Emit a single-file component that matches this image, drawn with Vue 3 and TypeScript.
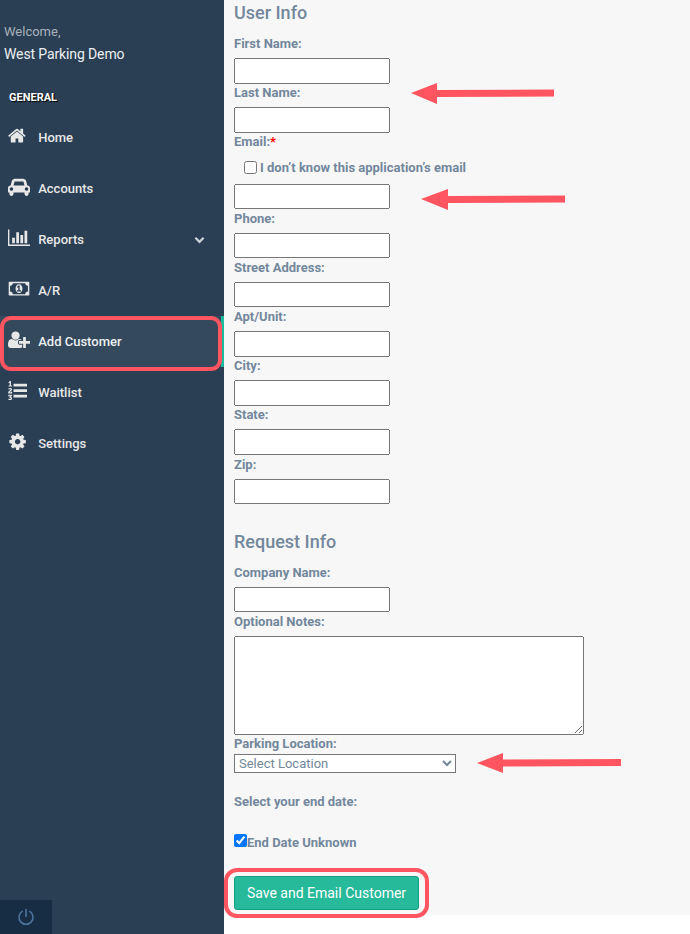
<template>
  <div class="page">
    <aside class="sidebar">
      <div class="profile">
        <span class="welcome">Welcome,</span>
        <span class="user-name">West Parking Demo</span>
      </div>
      <h3 class="nav-title">GENERAL</h3>
      <nav class="nav">
        <a v-for="item in navItems" :key="item.label" class="nav-item" :class="{ active: item.active }">
          <span class="icon-box">
            <svg class="nav-icon" :width="item.width" :viewBox="item.box" fill="currentColor"><path :d="item.path" /></svg>
          </span>
          <span class="nav-label">{{ item.label }}</span>
          <svg v-if="item.chevron" class="chevron" viewBox="0 0 12 8" fill="none" stroke="currentColor" stroke-width="2.4">
            <path d="M1.5 1.5 6 6l4.500-4.500" />
          </svg>
          <span v-if="item.active" class="ring nav-ring"></span>
        </a>
      </nav>
      <div class="sidebar-footer">
        <svg viewBox="0 0 18 18" width="18" height="18" fill="none" stroke="currentColor" stroke-width="1.600" stroke-linecap="round">
          <path d="M5.200 3.400a7 7 0 1 0 7.600 0" />
          <path d="M9 1.500v7" />
        </svg>
      </div>
    </aside>

    <main class="content">
      <h2 class="section-title first">User Info</h2>
      <div v-for="field in userFields" :key="field.label" class="field">
        <label>{{ field.label }}<span v-if="field.required" class="required">*</span></label>
        <div v-if="field.required" class="unknown-email">
          <input type="checkbox" />
          <span>I don’t know this application’s email</span>
        </div>
        <input type="text" class="text-input" />
      </div>

      <h2 class="section-title second">Request Info</h2>
      <div class="field">
        <label>Company Name:</label>
        <input type="text" class="text-input" />
      </div>
      <div class="field">
        <label>Optional Notes:</label>
        <textarea class="notes"></textarea>
      </div>
      <div class="location">
        <label>Parking Location:</label>
        <select class="location-select">
          <option>Select Location</option>
        </select>
      </div>
      <label class="end-date">Select your end date:</label>
      <label class="end-unknown"><input type="checkbox" checked />End Date Unknown</label>
      <div class="save-wrap">
        <button class="save" type="button">Save and Email Customer</button>
        <span class="ring save-ring"></span>
      </div>
    </main>

    <svg class="arrows" width="690" height="934" viewBox="0 0 690 934" fill="#ff5560">
      <path d="M411 93 437 83v7l117-.5v7l-117 .5v7z" />
      <path d="M421 199 448 189v7l117-.5v7l-117 .5v7z" />
      <path d="M477 763 503 753v6.500l118-.5v7l-118 .5v6.500z" />
    </svg>
  </div>
</template>

<script setup lang="ts">
interface NavItem {
  label: string;
  box: string;
  width: number;
  path: string;
  chevron?: boolean;
  active?: boolean;
}

const navItems: NavItem[] = [
  {
    label: 'Home',
    box: '0 0 1792 1792',
    width: 19.25,
    path: 'M1408 992v480q0 26-19 45t-45 19h-384v-384h-256v384h-384q-26 0-45-19t-19-45v-480q0-1 .5-3t.5-3l575-474 575 474q1 2 1 6zm223-69l-62 74q-8 9-21 11h-3q-13 0-21-7l-692-577-692 577q-12 8-24 7-13-2-21-11l-62-74q-8-10-7-23.500t11-21.500l719-599q32-26 76-26t76 26l244 204v-195q0-14 9-23t23-9h192q14 0 23 9t9 23v408l219 182q10 8 11 21.500t-7 23.500z',
  },
  {
    label: 'Accounts',
    box: '0 0 2048 1792',
    width: 22,
    path: 'M480 1120q0-66-47-113t-113-47-113 47-47 113 47 113 113 47 113-47 47-113zm36-320h1016l-89-357q-2-8-14-17.500t-21-9.500h-768q-9 0-21 9.500t-14 17.500zm1372 320q0-66-47-113t-113-47-113 47-47 113 47 113 113 47 113-47 47-113zm160-96v384q0 14-9 23t-23 9h-96v128q0 80-56 136t-136 56-136-56-56-136v-128h-1024v128q0 80-56 136t-136 56-136-56-56-136v-128h-96q-14 0-23-9t-9-23v-384q0-93 65.500-158.500t158.500-65.500h28l105-419q23-94 104-157.500t179-63.500h768q98 0 179 63.500t104 157.500l105 419h28q93 0 158.500 65.500t65.500 158.500z',
  },
  {
    label: 'Reports',
    box: '0 0 2048 1792',
    width: 22,
    path: 'M640 896v512h-256v-512h256zm384-512v1024h-256v-1024h256zm1024 1152v128h-2048v-1536h128v1408h1920zm-640-896v768h-256v-768h256zm384-384v1152h-256v-1152h256z',
    chevron: true,
  },
  {
    label: 'A/R',
    box: '0 0 2048 1792',
    width: 22,
    path: 'M832 1152h384v-96h-128v-448h-114l-148 137 77 80q42-37 55-57h2v288h-128v96zm512-256q0 70-21 142t-59.500 134-101.500 101-138 39-138-39-101.500-101-59.500-134-21-142 21-142 59.500-134 101.500-101 138-39 138 39 101.500 101 59.500 134 21 142zm512 256v-512q-106 0-181-75t-75-181h-1152q0 106-75 181t-181 75v512q106 0 181 75t75 181h1152q0-106 75-181t181-75zm128-832v1152q0 26-19 45t-45 19h-1792q-26 0-45-19t-19-45v-1152q0-26 19-45t45-19h1792q26 0 45 19t19 45z',
  },
  {
    label: 'Add Customer',
    box: '0 0 2048 1792',
    width: 22,
    path: 'M704 896q-159 0-271.500-112.500t-112.500-271.500 112.500-271.500 271.500-112.500 271.500 112.500 112.500 271.500-112.500 271.500-271.500 112.500zm960 128h352q13 0 22.500 9.500t9.500 22.500v192q0 13-9.500 22.500t-22.500 9.500h-352v352q0 13-9.500 22.500t-22.500 9.500h-192q-13 0-22.500-9.500t-9.500-22.500v-352h-352q-13 0-22.500-9.500t-9.500-22.500v-192q0-13 9.500-22.500t22.500-9.500h352v-352q0-13 9.500-22.500t22.500-9.500h192q13 0 22.500 9.500t9.500 22.500v352zm-736 224q0 52 38 90t90 38h256v238q-68 50-171 50h-874q-121 0-194-69t-73-190q0-53 3.500-103.500t14-109 26.500-108.500 43-97.500 62-81 85.500-53.500 111.500-20q19 0 39 17 79 61 154.500 91.500t164.500 30.500 164.500-30.500 154.500-91.500q20-17 39-17 132 0 217 96h-223q-52 0-90 38t-38 90v192z',
    active: true,
  },
  {
    label: 'Waitlist',
    box: '0 0 1792 1792',
    width: 19.25,
    path: 'M381 1620q0 80-54.500 126t-135.500 46q-106 0-172-66l57-88q49 45 106 45 29 0 50.500-14.500t21.500-42.500q0-64-105-56l-26-56q8-10 32.500-43.500t42.500-54 37-38.500v-1q-16 0-48.500 1t-48.500 1v53h-106v-152h333v88l-95 115q51 12 81 49t30 88zm2-627v159h-362q-6-36-6-54 0-51 23.500-93t56.500-68 66-47.500 56.500-43.500 23.500-45q0-25-14.500-38.500t-39.500-13.500q-46 0-81 58l-85-59q24-51 71.500-79.500t105.500-28.500q73 0 123 41.500t50 112.500q0 50-34 91.500t-75 64.500-75.500 50.500-35.500 52.500h127v-60h105zm1409 319v192q0 13-9.500 22.500t-22.500 9.500h-1216q-13 0-22.500-9.500t-9.500-22.500v-192q0-14 9-23t23-9h1216q13 0 22.500 9.500t9.500 22.500zm-1408-899v99h-335v-99h107q0-41 .5-122t.5-121v-12h-2q-8 17-50 54l-71-76 136-127h106v404h108zm1408 387v192q0 13-9.500 22.500t-22.500 9.500h-1216q-13 0-22.500-9.500t-9.500-22.500v-192q0-14 9-23t23-9h1216q13 0 22.500 9.500t9.500 22.500zm0-512v192q0 13-9.500 22.500t-22.500 9.500h-1216q-13 0-22.500-9.500t-9.500-22.500v-192q0-13 9.500-22.500t22.500-9.500h1216q13 0 22.500 9.500t9.500 22.500z',
  },
  {
    label: 'Settings',
    box: '0 0 1792 1792',
    width: 19.25,
    path: 'M1152 896q0-106-75-181t-181-75-181 75-75 181 75 181 181 75 181-75 75-181zm512-109v222q0 12-8 23t-20 13l-185 28q-19 54-39 91 35 50 107 138 10 12 10 25t-9 23q-27 37-99 108t-94 71q-12 0-26-9l-138-108q-44 23-91 38-16 136-29 186-7 28-36 28h-222q-14 0-24.500-8.500t-11.500-21.500l-28-184q-49-16-90-37l-141 107q-10 9-25 9-14 0-25-11-126-114-165-168-7-10-7-23 0-12 8-23 15-21 51-66.500t54-70.500q-27-50-41-99l-183-27q-13-2-21-12.500t-8-23.500v-222q0-12 8-23t19-13l186-28q14-46 39-92-40-57-107-138-10-12-10-24 0-10 9-23 26-36 98.500-107.500t94.500-71.500q13 0 26 10l138 107q44-23 91-38 16-136 29-186 7-28 36-28h222q14 0 24.500 8.500t11.500 21.500l28 184q49 16 90 37l142-107q9-9 24-9 13 0 25 10 129 119 165 170 7 8 7 22 0 12-8 23-15 21-51 66.500t-54 70.500q26 50 41 98l183 28q13 2 21 12.500t8 23.500z',
  },
];

const userFields = [
  { label: 'First Name:' },
  { label: 'Last Name:' },
  { label: 'Email:', required: true },
  { label: 'Phone:' },
  { label: 'Street Address:' },
  { label: 'Apt/Unit:' },
  { label: 'City:' },
  { label: 'State:' },
  { label: 'Zip:' },
];
</script>

<style>
html,
body {
  margin: 0;
  background: #fff;
}
</style>

<style scoped>
.page {
  position: relative;
  display: flex;
  width: 690px;
  height: 934px;
  overflow: hidden;
  font-family: Roboto, "Liberation Sans", sans-serif;
  font-size: 13px;
  color: #73879c;
}

.sidebar {
  position: relative;
  flex: 0 0 224px;
  height: 934px;
  background: #2a3f54;
  box-sizing: border-box;
  padding-top: 22px;
}

.profile {
  display: flex;
  flex-direction: column;
  padding-left: 4px;
}

.welcome {
  height: 20px;
  line-height: 20px;
  font-size: 13px;
  color: #a9b2bb;
}

.user-name {
  margin-top: 2px;
  height: 20px;
  line-height: 20px;
  font-size: 14px;
  letter-spacing: -0.12px;
  color: #ecf0f1;
}

.nav-title {
  margin: 24px 0 0 9px;
  height: 20px;
  line-height: 20px;
  font-size: 11px;
  font-weight: 700;
  color: #fff;
  text-shadow: 1px 1px 1px #000;
}

.nav {
  display: flex;
  flex-direction: column;
  margin-top: 4px;
}

.nav-item {
  position: relative;
  display: flex;
  align-items: center;
  height: 51px;
  padding: 0 19px 0 8px;
  color: #e7e7e7;
  font-size: 13px;
  font-weight: 500;
}

.nav-item.active {
  background: #35495d;
  color: #ecf0f1;
  box-shadow: inset -3px 0 0 #1abb9c;
}

.icon-box {
  display: flex;
  flex: 0 0 22px;
  margin-top: -4px;
}

.nav-icon {
  display: block;
  height: 19.250px;
  color: #e7e7e7;
}

.nav-label {
  margin-left: 8.200px;
  flex: 1;
}

.chevron {
  width: 11px;
  height: 8px;
  color: #c9d0d6;
}

.ring {
  position: absolute;
  box-sizing: border-box;
  border: 4px solid #ff5560;
  pointer-events: none;
}

.nav-ring {
  left: 0;
  top: 0;
  width: 222px;
  height: 55px;
  border-radius: 11px;
}

.sidebar-footer {
  position: absolute;
  left: 0;
  bottom: 0;
  width: 52px;
  height: 34px;
  display: flex;
  align-items: center;
  justify-content: center;
  background: #172d44;
  color: #4b739b;
}

.content {
  flex: 1;
  height: 915px;
  background: #f7f7f7;
  box-sizing: border-box;
  padding-left: 10px;
}

.section-title {
  margin: 0;
  font-size: 18px;
  font-weight: 500;
  line-height: 26px;
  color: #73879c;
}

.section-title.first {
  height: 34.400px;
}

.section-title.second {
  margin-top: 25px;
  height: 34px;
}

.field label,
.location label,
.end-date,
.end-unknown {
  display: block;
  font-weight: 700;
  font-size: 13px;
  line-height: 18.600px;
}

.field label {
  padding-top: 0.6px;
  margin-bottom: 4.400px;
}

.required {
  color: #f00;
}

.text-input {
  display: block;
  box-sizing: border-box;
  width: 156px;
  height: 25.600px;
  margin: 0;
}

.unknown-email {
  display: flex;
  align-items: center;
  height: 31.600px;
  margin-top: -4.400px;
  padding: 0 0 0 10px;
  font-weight: 700;
  font-size: 13px;
  line-height: 18.600px;
}

.unknown-email input {
  margin: 0 3px 0 0;
  width: 13px;
  height: 13px;
}

.unknown-email span {
  margin-top: 2px;
}

.notes {
  display: block;
  box-sizing: border-box;
  width: 350px;
  height: 99px;
  margin: 0;
}

.location label {
  padding-top: 0.6px;
}

.location-select {
  display: block;
  width: 222px;
  height: 19px;
  margin: 0;
  font-family: inherit;
  font-size: 13px;
  color: #73879c;
  background: #fff;
}

.end-date {
  margin-top: 19.800px;
}

.end-unknown {
  display: flex;
  align-items: flex-start;
  margin-top: 23px;
}

.end-unknown input {
  margin: 0;
  width: 13px;
  height: 13px;
}

.save-wrap {
  position: relative;
  width: 185px;
  margin-top: 23px;
}

.save {
  display: block;
  box-sizing: border-box;
  width: 185px;
  height: 34px;
  padding: 0;
  border: 1px solid #169f85;
  border-radius: 3px;
  background: #26b99a;
  color: #fff;
  font-family: inherit;
  font-size: 14px;
}

.save-ring {
  left: -10px;
  top: -8px;
  width: 205px;
  height: 50px;
  border-radius: 13px;
}

.arrows {
  position: absolute;
  left: 0;
  top: 0;
  pointer-events: none;
}
</style>
